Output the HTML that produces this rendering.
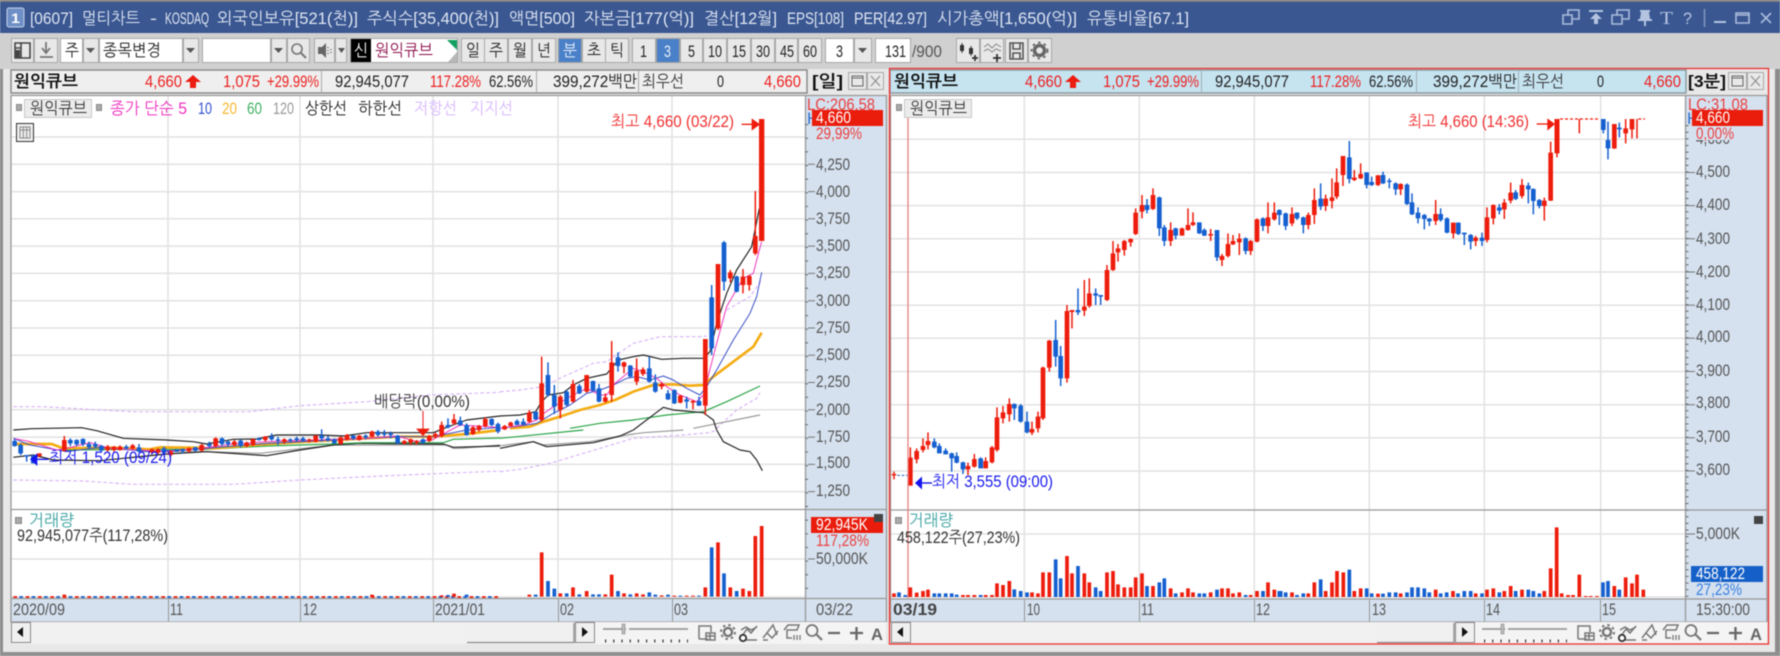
<!DOCTYPE html>
<html><head><meta charset="utf-8"><style>
html,body{margin:0;padding:0;width:1780px;height:656px;overflow:hidden;background:#d0d0d0}
svg{display:block;filter:blur(.45px)}
text{font-family:"Liberation Sans","NanumGothic","Noto Sans CJK KR",sans-serif;font-size:16.5px}
.w{fill:#fff;stroke:#a8a8a8}
.b{fill:#e8e8e8;stroke:#a8a8a8}
.g{fill:none;stroke:#e2e2e2;stroke-width:1.5}
.t{fill:#555}
.i{fill:none;stroke:#666;stroke-width:1.4}
</style></head><body>
<svg xmlns="http://www.w3.org/2000/svg" width="1780" height="656" viewBox="0 0 1780 656">
<defs>
<pattern id="d" width="2" height="2" patternUnits="userSpaceOnUse"><rect width="2" height="2" fill="#fafafa"/><rect width="1" height="1" fill="#e8e8e8"/><rect x="1" y="1" width="1" height="1" fill="#e8e8e8"/></pattern>
<clipPath id="cl"><rect x="806" y="97" width="80" height="13"/></clipPath>
<clipPath id="cr"><rect x="1686" y="97" width="80" height="13"/></clipPath>
</defs>
<rect width="1780" height="656" fill="#e8e8e8"/>
<rect x="0" y="0" width="3" height="656" fill="#8c8c8c"/>
<rect x="1775" y="0" width="5" height="656" fill="#8c8c8c"/>
<rect y="652" width="1780" height="4" fill="#909090"/>
<!-- title -->
<rect width="1780" height="33" fill="#3a5792"/>
<rect width="1780" height="2" fill="#7c7c7c"/>
<rect x="7" y="8" width="17" height="19" rx="2" fill="#6e8fc6" stroke="#c5d3ea"/>
<text x="11" y="23" fill="#fff" font-weight="bold" style="font-size:14px" textLength="9" lengthAdjust="spacingAndGlyphs">1</text>
<g fill="#dfe6f2">
<text x="30" y="24" textLength="43" lengthAdjust="spacingAndGlyphs">[0607]</text>
<text x="82" y="24" textLength="58" lengthAdjust="spacingAndGlyphs">멀티차트</text>
<text x="150" y="24" textLength="7" lengthAdjust="spacingAndGlyphs">-</text>
<text x="165" y="24" textLength="44" lengthAdjust="spacingAndGlyphs">KOSDAQ</text>
<text x="217" y="24" textLength="141" lengthAdjust="spacingAndGlyphs">외국인보유[521(천)]</text>
<text x="367" y="24" textLength="132" lengthAdjust="spacingAndGlyphs">주식수[35,400(천)]</text>
<text x="509" y="24" textLength="66" lengthAdjust="spacingAndGlyphs">액면[500]</text>
<text x="584" y="24" textLength="110" lengthAdjust="spacingAndGlyphs">자본금[177(억)]</text>
<text x="704" y="24" textLength="73" lengthAdjust="spacingAndGlyphs">결산[12월]</text>
<text x="787" y="24" textLength="57" lengthAdjust="spacingAndGlyphs">EPS[108]</text>
<text x="854" y="24" textLength="73" lengthAdjust="spacingAndGlyphs">PER[42.97]</text>
<text x="937" y="24" textLength="140" lengthAdjust="spacingAndGlyphs">시가총액[1,650(억)]</text>
<text x="1087" y="24" textLength="102" lengthAdjust="spacingAndGlyphs">유통비율[67.1]</text>
</g>
<g fill="none" stroke="#a9bbdb" stroke-width="1.6">
<path d="M1563 15h9v9h-9zM1568 15v-5h11v9h-7"/>
<path d="M1612 15h10v9h-10zM1617 15v-5h12v9h-7"/>
<path d="M1704.500 9v18" stroke="#7f95bd"/>
<path d="M1736 13h13v10h-13zM1736 15h13"/>
<path d="M1761 13l10 10M1771 13l-10 10"/>
</g>
<g fill="#b4c4e0">
<path d="M1589 10h14v2h-14zM1596 13l6 6h-4v5h-4v-5h-4z"/>
<path d="M1640 10h10v2h-1l1 7h2v2h-6v5h-2v-5h-6v-2h2l1-7h-1z"/>
<rect x="1714" y="21" width="12" height="2"/>
<text x="1660" y="24" style="font-size:18px;font-family:'Liberation Serif',serif" textLength="13" lengthAdjust="spacingAndGlyphs">T</text>
<text x="1683" y="24" style="font-size:17px" textLength="9" lengthAdjust="spacingAndGlyphs">?</text>
</g>
<!-- toolbar -->
<rect y="33" width="1780" height="36" fill="#d0d0d0"/>
<g>
<rect class="b" x="11.500" y="38.500" width="22" height="24"/><rect class="b" x="34.500" y="38.500" width="23" height="24"/>
<rect class="w" x="60.500" y="38.500" width="22" height="24"/><rect class="b" x="83.500" y="38.500" width="15" height="24"/>
<rect class="w" x="99.500" y="38.500" width="83" height="24"/><rect class="b" x="183.500" y="38.500" width="15" height="24"/>
<rect class="w" x="202.500" y="38.500" width="68" height="24"/><rect class="b" x="271.500" y="38.500" width="15" height="24"/><rect class="b" x="287.500" y="38.500" width="22" height="24"/>
<rect class="b" x="314.500" y="38.500" width="20" height="24"/><rect class="b" x="335.500" y="38.500" width="11" height="24"/>
<rect class="w" x="350.500" y="38.500" width="107" height="24"/>
<rect x="351" y="39" width="20" height="23" fill="#000"/>
<path d="M447 40h10v10z" fill="#12a060"/><path d="M457 52v10h-9z" fill="#b8b8b8"/>
<rect class="b" x="461.500" y="38.500" width="23" height="24"/><rect class="b" x="484.500" y="38.500" width="23" height="24"/><rect class="b" x="508.500" y="38.500" width="23" height="24"/><rect class="b" x="532.500" y="38.500" width="23" height="24"/>
<rect x="558.500" y="38.500" width="23" height="24" fill="#4a80c8" stroke="#a0a0a0"/>
<rect class="b" x="582.500" y="38.500" width="23" height="24"/><rect class="b" x="605.500" y="38.500" width="23" height="24"/>
<rect class="b" x="632.500" y="38.500" width="23" height="24"/>
<rect x="656.500" y="38.500" width="23" height="24" fill="#4a80c8" stroke="#a0a0a0"/>
<rect class="b" x="680.500" y="38.500" width="22" height="24"/><rect class="b" x="703.500" y="38.500" width="23" height="24"/><rect class="b" x="727.500" y="38.500" width="23" height="24"/><rect class="b" x="751.500" y="38.500" width="23" height="24"/><rect class="b" x="775.500" y="38.500" width="22" height="24"/><rect class="b" x="798.500" y="38.500" width="23" height="24"/>
<rect class="w" x="825.500" y="38.500" width="28" height="24"/><rect class="b" x="854.500" y="38.500" width="17" height="24"/>
<rect class="w" x="875.500" y="38.500" width="35" height="24"/>
<rect class="b" x="956.500" y="38.500" width="23" height="24"/><rect class="b" x="980.500" y="38.500" width="23" height="24"/><rect class="b" x="1005.500" y="38.500" width="22" height="24"/><rect class="b" x="1028.500" y="38.500" width="23" height="24"/>
</g>
<path d="M86 48h9l-4.500 5zM186 48h9l-4.500 5zM274 48h9l-4.500 5zM338 48h7l-3.500 5zM858 48h9l-4.500 5z" fill="#555"/>
<path d="M15 43h15v15h-15zM21 43v15M15 48h6" fill="none" stroke="#444" stroke-width="1.6"/>
<path d="M15 50h5v8h-5z" fill="#444"/>
<path d="M46 42v10M42 48l4 5 4-5M40 57h13" fill="none" stroke="#777" stroke-width="1.8"/>
<circle cx="297" cy="49" r="5" fill="none" stroke="#777" stroke-width="1.6"/><path d="M301 53l5 5" stroke="#777" stroke-width="2"/>
<path d="M318 47h4l4-4v15l-4-4h-4z" fill="#666"/><path d="M328 47v1M328 50v1M328 53v1M331 49v1M331 52v1" stroke="#666" stroke-width="1.4"/>
<text x="65" y="56" fill="#222" textLength="14" lengthAdjust="spacingAndGlyphs">주</text>
<text x="103" y="56" fill="#222" textLength="58" lengthAdjust="spacingAndGlyphs">종목변경</text>
<text x="354" y="56" fill="#fff" textLength="14" lengthAdjust="spacingAndGlyphs">신</text>
<text x="375" y="56" fill="#8c0b4a" textLength="58" lengthAdjust="spacingAndGlyphs">원익큐브</text>
<g fill="#222">
<text x="466" y="56" textLength="14" lengthAdjust="spacingAndGlyphs">일</text><text x="489" y="56" textLength="14" lengthAdjust="spacingAndGlyphs">주</text><text x="513" y="56" textLength="14" lengthAdjust="spacingAndGlyphs">월</text><text x="537" y="56" textLength="14" lengthAdjust="spacingAndGlyphs">년</text>
<text x="587" y="56" textLength="14" lengthAdjust="spacingAndGlyphs">초</text><text x="610" y="56" textLength="14" lengthAdjust="spacingAndGlyphs">틱</text>
<text x="640" y="57" textLength="7" lengthAdjust="spacingAndGlyphs">1</text><text x="688" y="57" textLength="7" lengthAdjust="spacingAndGlyphs">5</text>
<text x="708" y="57" textLength="14" lengthAdjust="spacingAndGlyphs">10</text><text x="732" y="57" textLength="14" lengthAdjust="spacingAndGlyphs">15</text><text x="756" y="57" textLength="14" lengthAdjust="spacingAndGlyphs">30</text><text x="780" y="57" textLength="14" lengthAdjust="spacingAndGlyphs">45</text><text x="803" y="57" textLength="14" lengthAdjust="spacingAndGlyphs">60</text>
<text x="836" y="57" textLength="7" lengthAdjust="spacingAndGlyphs">3</text><text x="885" y="57" textLength="21" lengthAdjust="spacingAndGlyphs">131</text>
</g>
<text x="563" y="56" fill="#e8f0fa" textLength="14" lengthAdjust="spacingAndGlyphs">분</text>
<text x="664" y="57" fill="#e8f0fa" textLength="7" lengthAdjust="spacingAndGlyphs">3</text>
<text x="912" y="57" fill="#555" textLength="30" lengthAdjust="spacingAndGlyphs">/900</text>
<path d="M962 43v10M971 46v10" stroke="#333" stroke-width="1"/><path d="M960 45h4v6h-4zM969 48h4v6h-4z" fill="#333"/><path d="M972 58h6M975 55v6" stroke="#333" stroke-width="1.8"/>
<path d="M984 47l4-3 4 4 4-4 5 3M984 51l4-2 4 3 4-3 5 2" fill="none" stroke="#888"/><path d="M993 58h8M997 54v8" stroke="#333" stroke-width="1.8"/>
<path d="M1010 43h13v16h-13zM1013 43v6h7v-6M1013 59v-6h7v6" fill="none" stroke="#555" stroke-width="1.6"/>
<circle cx="1039.500" cy="50.500" r="5" fill="none" stroke="#666" stroke-width="3.500"/><circle cx="1039.500" cy="50.500" r="8" fill="none" stroke="#666" stroke-width="1.800" stroke-dasharray="2.500 3.500"/>
<!-- info bars -->
<rect x="11" y="70" width="796" height="23" fill="#efefef" stroke="#8a8a8a" stroke-width="1.500"/>
<path d="M321.500 70v23M536.500 70v23M638.500 70v23" stroke="#a8a8a8"/>
<rect x="890" y="70" width="796" height="23" fill="#c6e3f0" stroke="#8a9a9f" stroke-width="1.500"/>
<path d="M1201.500 70v23M1416.500 70v23M1518.500 70v23" stroke="#a0b0b4"/>
<g id="info">
<text x="14" y="87" font-weight="bold" fill="#111" textLength="64" lengthAdjust="spacingAndGlyphs">원익큐브</text>
<text x="145" y="87" fill="#ec2020" textLength="37" lengthAdjust="spacingAndGlyphs">4,660</text>
<path d="M193 75l8 7h-5v6h-6v-6h-5z" fill="#ec1c10"/>
<text x="223" y="87" fill="#ec2020" textLength="37" lengthAdjust="spacingAndGlyphs">1,075</text>
<text x="267" y="87" fill="#ec2020" textLength="52" lengthAdjust="spacingAndGlyphs">+29.99%</text>
<text x="335" y="87" fill="#222" textLength="74" lengthAdjust="spacingAndGlyphs">92,945,077</text>
<text x="430" y="87" fill="#ec2020" textLength="51" lengthAdjust="spacingAndGlyphs">117.28%</text>
<text x="489" y="87" fill="#222" textLength="44" lengthAdjust="spacingAndGlyphs">62.56%</text>
<text x="553" y="87" fill="#222" textLength="84" lengthAdjust="spacingAndGlyphs">399,272백만</text>
<text x="642" y="87" fill="#333" textLength="42" lengthAdjust="spacingAndGlyphs">최우선</text>
<text x="717" y="87" fill="#222" textLength="7" lengthAdjust="spacingAndGlyphs">0</text>
<text x="764" y="87" fill="#ec2020" textLength="37" lengthAdjust="spacingAndGlyphs">4,660</text>
</g>
<g transform="translate(880 0)">
<text x="14" y="87" font-weight="bold" fill="#111" textLength="64" lengthAdjust="spacingAndGlyphs">원익큐브</text>
<text x="145" y="87" fill="#ec2020" textLength="37" lengthAdjust="spacingAndGlyphs">4,660</text>
<path d="M193 75l8 7h-5v6h-6v-6h-5z" fill="#ec1c10"/>
<text x="223" y="87" fill="#ec2020" textLength="37" lengthAdjust="spacingAndGlyphs">1,075</text>
<text x="267" y="87" fill="#ec2020" textLength="52" lengthAdjust="spacingAndGlyphs">+29.99%</text>
<text x="335" y="87" fill="#222" textLength="74" lengthAdjust="spacingAndGlyphs">92,945,077</text>
<text x="430" y="87" fill="#ec2020" textLength="51" lengthAdjust="spacingAndGlyphs">117.28%</text>
<text x="489" y="87" fill="#222" textLength="44" lengthAdjust="spacingAndGlyphs">62.56%</text>
<text x="553" y="87" fill="#222" textLength="84" lengthAdjust="spacingAndGlyphs">399,272백만</text>
<text x="642" y="87" fill="#333" textLength="42" lengthAdjust="spacingAndGlyphs">최우선</text>
<text x="717" y="87" fill="#222" textLength="7" lengthAdjust="spacingAndGlyphs">0</text>
<text x="764" y="87" fill="#ec2020" textLength="37" lengthAdjust="spacingAndGlyphs">4,660</text>
</g>
<text x="812" y="87" font-weight="bold" fill="#111" textLength="31" lengthAdjust="spacingAndGlyphs">[일]</text>
<text x="1688" y="87" font-weight="bold" fill="#111" textLength="38" lengthAdjust="spacingAndGlyphs">[3분]</text>
<g>
<rect class="b" x="848.500" y="72.500" width="18" height="17"/><rect class="b" x="867.500" y="72.500" width="16" height="17"/>
<rect class="b" x="1728.500" y="72.500" width="18" height="17"/><rect class="b" x="1747.500" y="72.500" width="16" height="17"/>
<path d="M852 76h11v10h-11zM852 78h11M1732 76h11v10h-11zM1732 78h11" fill="none" stroke="#666"/>
<path d="M871 76l9 10M880 76l-9 10M1751 76l9 10M1760 76l-9 10" stroke="#888"/>
</g>
<!-- plots -->
<rect x="11" y="96" width="795" height="502" fill="#fff"/>
<rect x="806" y="96" width="80" height="526" fill="#d5e1ef"/>
<rect x="891" y="96" width="795" height="503" fill="#fff"/>
<rect x="1686" y="96" width="81" height="526" fill="#d5e1ef"/>
<rect x="11" y="598" width="795" height="24" fill="#d5e1ef"/>
<rect x="891" y="599" width="795" height="23" fill="#d5e1ef"/>
<path class="g" d="M11 137H805M11 164.300H805M11 191.600H805M11 218.800H805M11 246.100H805M11 273.400H805M11 300.700H805M11 328H805M11 355.200H805M11 382.500H805M11 409.800H805M11 437.100H805M11 464.400H805M11 491.600H805M11 559H805M11 597H805"/>
<path class="g" d="M168 96V598M300 96V598M433 96V598M558 96V598M672 96V598"/>
<path class="g" d="M891 139.300H1685M891 172.500H1685M891 205.600H1685M891 238.800H1685M891 272H1685M891 305.200H1685M891 338.300H1685M891 371.500H1685M891 404.700H1685M891 437.800H1685M891 471H1685M891 534H1685M891 597H1685"/>
<path class="g" d="M1024.300 96V599M1139.300 96V599M1254.300 96V599M1369.300 96V599M1484.300 96V599M1600.700 96V599"/>
<path d="M10.500 95.500H886.500V622M805.500 96V622M11 95.500V622H886M11 509.500H886M11 598.500H886" fill="none" stroke="#989898" stroke-width="1.300"/>
<path d="M890.500 95.500H1767V622M1685.500 96V622M890.500 95.500V622H1767M891 510H1767M891 599H1767" fill="none" stroke="#989898" stroke-width="1.300"/>
<path d="M168.500 599V622M300.500 599V622M433.500 599V622M558.500 599V622M672.500 599V622M1024.500 600V622M1139.500 600V622M1254.500 600V622M1369.500 600V622M1484.500 600V622M1600.500 600V622" stroke="#989898"/>
<!-- left chart lines (zoom 4 coords) -->
<g transform="translate(0 340) scale(.33333)" fill="none" stroke-linejoin="round">
<path d="M40 200L130 200L300 210L400 215L750 215L900 197L1100 185L1290 165L1500 157M40 420L250 423L400 433L700 433L900 420L1100 410L1500 393" stroke="#d9b4f8" stroke-width="3.500" stroke-dasharray="11 7"/>
<path d="M420 335L620 335L780 340L1000 315L1340 315L1360 325L1385 325L1500 315" stroke="#9a9a9a" stroke-width="3.500"/>
<path d="M40 270L95 266L245 263L290 272L370 295L500 300L580 305L620 312L700 298L770 297L830 285L960 285L1030 288L1100 278L1300 278L1340 262L1400 240L1500 228M40 352L100 345L160 360L300 362L500 342L620 335L770 345L800 347L900 330L1000 315L1080 310L1330 312L1360 322L1500 318" stroke="#222" stroke-width="3.500"/>
<path d="M200 330L400 328L620 328L800 318L1000 312L1090 308L1330 308L1360 298L1500 294" stroke="#2aa548" stroke-width="3.500"/>
<path d="M40 312L155 312L190 325L330 323L450 328L480 322L590 323L640 325L700 320L800 312L920 305L1100 295L1200 290L1300 290L1400 282L1500 270" stroke="#f4ac12" stroke-width="8"/>
<path d="M40 295L90 315L200 335L300 322L450 335L620 325L800 310L1000 300L1200 290L1300 290L1400 270L1500 262" stroke="#3a50c8" stroke-width="3"/>
<path d="M40 295L90 305L170 330L200 325L270 308L330 325L420 330L500 335L600 325L700 312L800 305L950 300L1100 295L1190 288L1250 305L1300 298L1380 255L1500 262" stroke="#f038c0" stroke-width="3"/>
<path stroke="#ee1c0c" stroke-width="4.500" d="M118 340V352M193 288V335M323 315V335M342 318V335M360 316V332M398 312V328M456 325V340M474 325V342M512 330V350M567 322V338M605 312V335M647 292V322M703 300V320M740 305V322M759 295V318M796 288V305M853 295V312M928 296V308M947 285V308M1022 290V313M1041 282V302M1078 285V302M1116 272V292M1213 300V314M1232 296V315M1250 300V314M1288 285V306M1306 278V295M1325 245V292M1362 222V255M1419 258V285M1437 255V275M1456 232V262"/>
<path stroke="#ee1c0c" stroke-width="14" d="M118 340V348M193 300V333M323 320V330M342 320V330M360 320V330M398 316V325M456 328V338M474 328V338M512 335V345M567 325V333M605 315V332M647 295V318M703 305V315M740 308V318M759 298V315M796 290V300M853 298V305M928 298V302M947 287V305M1022 292V312M1041 285V298M1078 287V300M1116 275V290M1213 303V310M1232 298V308M1250 303V308M1288 288V303M1306 282V290M1325 255V288M1362 238V250M1419 262V282M1437 258V270M1456 237V258"/>
<path stroke="#1560d0" stroke-width="4.500" d="M44 295V320M62 310V345M80 345V365M100 345V370M211 295V318M230 298V318M249 295V318M267 305V325M286 305V325M304 315V338M379 315V330M417 312V337M492 320V342M530 328V335M548 325V340M586 320V335M628 305V322M666 292V318M684 302V320M722 298V322M777 292V302M815 280V302M834 290V315M871 295V308M890 290V305M909 290V305M965 268V305M984 288V305M1003 295V312M1060 285V300M1097 283V298M1134 270V290M1153 270V290M1172 275V295M1193 285V312M1269 295V312M1344 235V265M1381 230V258M1400 250V287M1475 235V258M1494 248V280"/>
<path stroke="#1560d0" stroke-width="14" d="M44 303V318M62 315V340M80 345V350M100 345V370M211 300V310M230 300V313M249 297V312M267 312V322M286 312V320M304 318V332M379 320V325M417 322V335M492 325V338M530 328V335M548 328V333M586 322V332M628 312V318M666 295V312M684 305V312M722 302V318M777 295V300M815 290V298M834 298V302M871 298V302M890 295V300M909 295V302M965 287V295M984 295V300M1003 298V310M1060 287V295M1097 287V292M1134 275V285M1153 280V284M1172 280V285M1193 287V310M1269 298V308M1344 255V262M1381 242V255M1400 255V285M1475 237V255M1494 252V275"/>
<path d="M1269 213V270" stroke="#ee3030" stroke-width="3.500"/><path d="M1248 266H1290L1269 288z" fill="#ee1c0c"/>
<path d="M90 358L112 340V378z" fill="#1414ee"/><path d="M112 358H145" stroke="#1414ee" stroke-width="4"/>
<path d="M40 771H1500" stroke="#ee1c0c" stroke-width="5" stroke-dasharray="11 26"/>
<path d="M58 771H1500" stroke="#1560d0" stroke-width="5" stroke-dasharray="11 26"/>
<path d="M193 771V764M1116 771V764M1325 771V766M1362 771V761" stroke="#ee1c0c" stroke-width="11"/>
<path d="M1344 771V765M1400 771V764" stroke="#1560d0" stroke-width="11"/>
</g>
<text x="374" y="407" fill="#333" textLength="96" lengthAdjust="spacingAndGlyphs">배당락(0,00%)</text>
<text x="49" y="463" fill="#1a1aee" textLength="123" lengthAdjust="spacingAndGlyphs">최저 1,520 (09/24)</text>
<!-- left zoom 5 -->
<g transform="translate(500 100) scale(.33333)" fill="none" stroke-linejoin="round">
<path d="M0 875L60 870L130 860L190 830L280 790L320 785L400 730L480 710L600 710L620 708M680 630L750 590L785 540M650 985L710 930L770 895L780 878" stroke="#d9b4f8" stroke-width="3.500" stroke-dasharray="11 7"/>
<path d="M580 985L780 945" stroke="#9a9a9a" stroke-width="3.500"/>
<path d="M210 985L300 970L400 960L500 945L610 935L680 905L780 858" stroke="#2aa548" stroke-width="3.500"/>
<path d="M0 948L60 945L107 935L125 905L145 885L190 878L220 855L260 835L320 822L355 780L400 770L430 765L485 778L550 775L610 775L630 755L650 670L680 580L710 510L755 440L778 325M400 990L490 922L520 930L610 938L640 960L650 990" stroke="#222" stroke-width="3.500"/>
<path d="M30 985L90 980L130 965L180 950L240 930L300 915L345 900L400 875L460 855L520 853L570 857L610 855L640 830L700 785L760 740L785 698" stroke="#f4ac12" stroke-width="8"/>
<path d="M0 985L60 978L110 970L160 940L210 915L260 880L300 870L340 855L380 835L410 830L450 840L490 828L520 840L560 865L600 885L620 860L650 810L700 720L750 640L770 590L785 517" stroke="#3a50c8" stroke-width="3"/>
<path d="M0 985L70 975L110 960L125 945L160 920L210 890L260 865L300 885L320 885L345 850L400 805L430 815L470 835L500 860L540 885L590 905L610 885L650 730L680 620L700 585L730 535L760 520L770 480L785 425" stroke="#f038c0" stroke-width="3"/>
<path stroke="#ee1c0c" stroke-width="4.500" d="M14 975V990M32 965V980M88 930V968M125 770V965M181 885V955M219 840V908M260 825V878M316 880V908M335 723V905M372 785V820M410 775V855M429 802V828M485 847V868M541 885V910M579 900V928M616 717V945M654 492V690M691 510V547M729 507V580M748 525V572M766 273V465"/>
<path stroke="#ee1c0c" stroke-width="14" d="M14 978V988M32 968V978M88 938V965M125 850V960M181 890V930M219 852V905M260 825V875M316 892V905M335 787V885M372 787V800M410 812V845M429 808V822M485 852V860M541 887V908M579 903V908M616 717V917M654 492V685M691 517V535M729 530V555M748 528V555M766 408V460"/>
<path stroke="#ee1c0c" stroke-width="16" d="M785 57V423"/>
<path stroke="#1560d0" stroke-width="4.500" d="M51 958V975M70 955V975M107 935V960M144 787V890M163 855V942M200 870V918M238 852V882M279 842V875M297 852V907M354 757V815M391 795V832M448 770V848M466 823V878M504 870V900M523 868V912M560 890V925M597 890V918M635 555V765M672 423V572M710 527V577"/>
<path stroke="#1560d0" stroke-width="14" d="M51 963V975M70 965V975M107 935V958M144 825V885M163 885V920M200 875V915M238 858V880M279 843V872M297 865V905M354 772V798M391 797V830M448 805V845M466 848V875M504 880V898M523 870V910M560 898V905M597 903V917M635 592V745M672 427V545M710 530V575"/>
<path d="M725 73H760" stroke="#ee1c0c" stroke-width="4"/><path d="M755 55L780 73L755 92z" fill="#ee1c0c"/>
</g>
<text x="611" y="127" fill="#f03030" textLength="123" lengthAdjust="spacingAndGlyphs">최고 4,660 (03/22)</text>
<!-- left lines lower zoom 6 -->
<g transform="translate(500 430) scale(.33333)" fill="none" stroke-linejoin="round">
<path d="M0 125L60 118L150 100L250 70L400 25L550 15L630 8L650 0" stroke="#d9b4f8" stroke-width="3.500" stroke-dasharray="11 7"/>
<path d="M0 47L100 35L130 45L270 35L380 15L430 8L550 0" stroke="#9a9a9a" stroke-width="3.500"/>
<path d="M0 25L250 0" stroke="#2aa548" stroke-width="3.500"/>
<path d="M0 55L100 35L140 50L280 38L360 18L400 0M650 0L670 35L720 60L750 65L770 90L787 122" stroke="#222" stroke-width="3.500"/>
<path stroke="#ee1c0c" stroke-width="11" d="M88 500V494M125 500V367M181 500V490M219 500V472M260 500V483M316 500V493M335 500V434M372 500V490M410 500V490M429 500V493M485 500V496M523 500V497M560 500V497M579 500V497M616 500V472M654 500V337M691 500V472M729 500V476M748 500V483M766 500V318M785 500V288"/>
<path stroke="#1560d0" stroke-width="11" d="M107 500V494M144 500V453M163 500V476M200 500V490M238 500V493M279 500V493M297 500V493M354 500V483M391 500V493M448 500V487M466 500V494M504 500V494M541 500V497M597 500V497M635 500V352M672 500V430M710 500V483"/>
</g>
<!-- right candles zoom 7 -->
<g transform="translate(890 100) scale(.33333)" fill="none">
<path d="M22 1126H52" stroke="#1560d0" stroke-width="3" stroke-dasharray="8 5"/>
<path stroke="#ee1c0c" stroke-width="4.500" d="M12 1115V1138M61 1042V1157M80 1045V1090M99 1015V1057M114 997V1048M234 1088V1125M253 1062V1103M287 1072V1105M306 1038V1090M321 922V1055M339 918V970M358 895V965M426 965V1005M444 935V997M459 800V960M478 720V815M531 615V848M546 630V685M583 540V648M598 535V623M651 495V603M669 423V513M684 432V485M703 420V467M722 415V440M737 325V405M756 285V355M789 265V330M842 367V438M876 383V407M894 325V392M909 337V378M962 387V423M996 462V498M1014 400V472M1029 405V435M1048 400V465M1082 420V465M1101 355V427M1134 307V400M1153 307V362M1206 322V378M1255 338V388M1273 265V372M1307 284V333M1326 235V325"/>
<path stroke="#ee1c0c" stroke-width="14" d="M12 1122V1126M61 1073V1157M80 1053V1078M99 1038V1050M114 1023V1035M234 1098V1108M253 1077V1100M287 1083V1105M306 1042V1087M321 952V1050M339 937V955M358 912V943M426 987V998M444 950V985M459 803V955M478 722V803M531 633V835M546 630V636M583 620V632M598 580V618M651 510V600M669 460V510M684 445V457M703 423V450M722 417V427M737 338V402M756 315V335M789 285V327M842 390V423M876 385V407M894 375V390M909 367V375M962 402V407M996 468V480M1014 432V468M1029 423V433M1048 416V427M1082 423V453M1101 358V425M1134 352V378M1153 338V358M1206 342V370M1255 345V375M1273 300V345M1307 296V318M1326 292V303"/>
<path stroke="#1560d0" stroke-width="4.500" d="M133 1015V1045M148 1030V1060M167 1045V1063M185 1058V1115M200 1057V1090M219 1085V1122M272 1072V1105M373 910V960M392 912V968M411 935V1000M497 660V800M512 738V858M564 565V645M617 565V615M632 585V615M771 297V340M808 290V408M823 375V438M857 383V418M928 367V402M943 385V408M981 390V483M1067 412V463M1119 352V393M1168 328V375M1187 338V390M1221 337V360M1240 350V400M1292 250V330"/>
<path stroke="#1560d0" stroke-width="14" d="M133 1025V1042M148 1038V1060M167 1052V1063M185 1060V1075M200 1068V1088M219 1087V1108M272 1075V1105M373 912V925M392 917V965M411 965V997M497 720V770M512 768V835M564 630V637M617 580V587M632 585V590M771 315V330M808 292V385M823 382V423M857 385V407M928 367V400M943 390V407M981 390V472M1067 415V453M1119 355V378M1168 330V345M1187 340V378M1221 338V355M1240 352V375M1292 296V320"/>
</g>
<!-- right candles zoom 8 -->
<g transform="translate(1330 100) scale(.33333)" fill="none">
<path stroke="#ee1c0c" stroke-width="4.500" d="M20 205V297M39 168V258M73 210V243M92 190V237M144 225V258M212 250V285M317 300V375M370 368V415M437 408V438M471 322V427M490 313V373M523 297V357M542 248V310M576 237V295M643 293V362M662 125V303M748 57V100M853 72V147M887 57V130M906 57V115M921 57V115"/>
<path stroke="#ee1c0c" stroke-width="14" d="M20 247V290M39 168V225M73 233V240M92 222V235M144 226V255M212 252V268M317 342V363M370 368V400M437 413V423M471 352V420M490 315V355M523 308V328M542 278V302M576 255V288M643 302V318M662 158V302M853 72V145M887 85V100M906 57V88"/>
<path stroke="#ee1c0c" stroke-width="15" d="M681 57V160"/><path stroke="#ee1c0c" stroke-width="4.500" d="M681 57V172"/>
<path d="M690 57H808M925 57H945" stroke="#ee1c0c" stroke-width="3.500" stroke-dasharray="9 6"/>
<path stroke="#1560d0" stroke-width="4.500" d="M58 123V250M110 217V265M125 230V258M159 215V252M178 235V265M197 247V285M231 250V315M246 280V345M264 322V370M283 342V388M298 354V378M332 325V365M351 352V400M385 367V405M403 398V435M422 402V448M456 398V438M508 312V343M557 270V300M595 248V310M610 265V343M628 297V325M820 57V100M834 65V178M868 68V112"/>
<path stroke="#1560d0" stroke-width="14" d="M58 172V237M110 217V255M125 246V255M159 225V250M178 242V246M197 250V268M231 254V312M246 307V343M264 338V355M283 345V357M298 356V364M332 342V360M351 355V398M385 368V402M403 398V403M422 405V425M456 413V423M508 322V332M557 277V297M595 257V268M610 267V303M628 300V318M820 57V90M834 120V145M868 83V88"/>
<path d="M620 72H655" stroke="#ee1c0c" stroke-width="4"/><path d="M652 55L675 72L652 92z" fill="#ee1c0c"/>
</g>
<path d="M908 115V598" stroke="#e98080" stroke-width="1.300"/>
<path d="M915 483L922 476.500V489.500z" fill="#1414ee"/><path d="M921 483H932" stroke="#1414ee" stroke-width="1.400"/>
<text x="932" y="487" fill="#1a1aee" textLength="121" lengthAdjust="spacingAndGlyphs">최저 3,555 (09:00)</text>
<text x="1408" y="127" fill="#f03030" textLength="121" lengthAdjust="spacingAndGlyphs">최고 4,660 (14:36)</text>
<!-- right volume -->
<g transform="translate(890 500) scale(.33333)" fill="none" stroke-width="11">
<path stroke="#ee1c0c" d="M12 291V280M61 291V262M80 291V278M99 291V273M114 291V269M219 291V285M234 291V285M253 291V285M287 291V285M306 291V285M321 291V250M339 291V255M358 291V243M426 291V277M444 291V280M459 291V217M478 291V217M531 291V168M546 291V220M583 291V220M598 291V247M651 291V217M669 291V213M684 291V253M703 291V262M722 291V262M737 291V232M756 291V220M789 291V258M842 291V265M876 291V277M894 291V265M909 291V277M962 291V277M996 291V265M1014 291V265M1029 291V280M1048 291V277M1082 291V285M1101 291V273M1134 291V247M1153 291V269"/>
<path stroke="#1560d0" d="M27 291V277M46 291V285M133 291V280M148 291V280M167 291V280M185 291V280M200 291V284M272 291V285M373 291V268M392 291V273M411 291V277M497 291V178M512 291V235M564 291V198M617 291V262M632 291V273M771 291V258M808 291V247M823 291V235M857 291V280M928 291V280M943 291V280M981 291V269M1067 291V285M1119 291V273M1168 291V273"/>
</g>
<g transform="translate(1280 500) scale(.33333)" fill="none" stroke-width="11">
<path stroke="#ee1c0c" d="M36 291V277M85 291V280M103 291V247M137 291V273M156 291V247M171 291V213M190 291V217M223 291V273M242 291V265M294 291V281M362 291V280M467 291V269M519 291V273M587 291V280M621 291V269M640 291V265M673 291V273M692 291V258M726 291V269M793 291V273M812 291V205M830 291V82M845 291V280M864 291V285M879 291V285M898 291V224M917 291V288M932 291V288M951 291V288M1003 291V258M1037 291V232M1056 291V250M1071 291V224M1090 291V269"/>
<path stroke="#1560d0" d="M2 291V273M17 291V277M51 291V285M70 291V280M122 291V238M208 291V209M260 291V265M275 291V280M309 291V281M328 291V277M347 291V277M381 291V277M396 291V262M414 291V262M433 291V265M448 291V277M482 291V280M500 291V277M534 291V280M553 291V273M572 291V273M606 291V280M658 291V277M707 291V273M745 291V269M760 291V273M778 291V280M969 291V247M984 291V243M1018 291V269"/>
</g>
<!-- axis left -->
<path d="M806.500 124V598" stroke="#777" stroke-width="3" stroke-dasharray="1.200 12.440" fill="none"/>
<path d="M808 164.300h7M808 191.600h7M808 218.800h7M808 246.100h7M808 273.400h7M808 300.700h7M808 328h7M808 355.200h7M808 382.500h7M808 409.800h7M808 437.100h7M808 464.400h7M808 491.600h7M808 559h7" stroke="#777" fill="none"/>
<path d="M1687 125V597" stroke="#777" stroke-width="3" stroke-dasharray="1.200 5.430" fill="none"/>
<path d="M1686 172.500h9M1686 205.600h9M1686 238.800h9M1686 272h9M1686 305.200h9M1686 338.300h9M1686 371.500h9M1686 404.700h9M1686 437.800h9M1686 471h9M1686 534h9" stroke="#777" fill="none"/>
<g class="t">
<text x="816" y="170" textLength="34" lengthAdjust="spacingAndGlyphs">4,250</text>
<text x="816" y="197" textLength="34" lengthAdjust="spacingAndGlyphs">4,000</text>
<text x="816" y="224" textLength="34" lengthAdjust="spacingAndGlyphs">3,750</text>
<text x="816" y="251" textLength="34" lengthAdjust="spacingAndGlyphs">3,500</text>
<text x="816" y="278" textLength="34" lengthAdjust="spacingAndGlyphs">3,250</text>
<text x="816" y="306" textLength="34" lengthAdjust="spacingAndGlyphs">3,000</text>
<text x="816" y="333" textLength="34" lengthAdjust="spacingAndGlyphs">2,750</text>
<text x="816" y="360" textLength="34" lengthAdjust="spacingAndGlyphs">2,500</text>
<text x="816" y="387" textLength="34" lengthAdjust="spacingAndGlyphs">2,250</text>
<text x="816" y="415" textLength="34" lengthAdjust="spacingAndGlyphs">2,000</text>
<text x="816" y="442" textLength="34" lengthAdjust="spacingAndGlyphs">1,750</text>
<text x="816" y="468" textLength="34" lengthAdjust="spacingAndGlyphs">1,500</text>
<text x="816" y="496" textLength="34" lengthAdjust="spacingAndGlyphs">1,250</text>
<text x="816" y="564" textLength="52" lengthAdjust="spacingAndGlyphs">50,000K</text>
<text x="816" y="615" textLength="37" lengthAdjust="spacingAndGlyphs">03/22</text>
<text x="1696" y="144" textLength="34" lengthAdjust="spacingAndGlyphs">4,600</text>
<text x="1696" y="177" textLength="34" lengthAdjust="spacingAndGlyphs">4,500</text>
<text x="1696" y="210" textLength="34" lengthAdjust="spacingAndGlyphs">4,400</text>
<text x="1696" y="244" textLength="34" lengthAdjust="spacingAndGlyphs">4,300</text>
<text x="1696" y="277" textLength="34" lengthAdjust="spacingAndGlyphs">4,200</text>
<text x="1696" y="310" textLength="34" lengthAdjust="spacingAndGlyphs">4,100</text>
<text x="1696" y="342" textLength="34" lengthAdjust="spacingAndGlyphs">4,000</text>
<text x="1696" y="376" textLength="34" lengthAdjust="spacingAndGlyphs">3,900</text>
<text x="1696" y="408" textLength="34" lengthAdjust="spacingAndGlyphs">3,800</text>
<text x="1696" y="442" textLength="34" lengthAdjust="spacingAndGlyphs">3,700</text>
<text x="1696" y="475" textLength="34" lengthAdjust="spacingAndGlyphs">3,600</text>
<text x="1696" y="539" textLength="44" lengthAdjust="spacingAndGlyphs">5,000K</text>
<text x="1696" y="615" textLength="54" lengthAdjust="spacingAndGlyphs">15:30:00</text>
<text x="13" y="615" textLength="52" lengthAdjust="spacingAndGlyphs">2020/09</text>
<text x="170" y="615" textLength="13" lengthAdjust="spacingAndGlyphs">11</text>
<text x="303" y="615" textLength="14" lengthAdjust="spacingAndGlyphs">12</text>
<text x="435" y="615" textLength="50" lengthAdjust="spacingAndGlyphs">2021/01</text>
<text x="560" y="615" textLength="14" lengthAdjust="spacingAndGlyphs">02</text>
<text x="674" y="615" textLength="14" lengthAdjust="spacingAndGlyphs">03</text>
<text x="1027" y="615" textLength="13" lengthAdjust="spacingAndGlyphs">10</text>
<text x="1141" y="615" textLength="13" lengthAdjust="spacingAndGlyphs">11</text>
<text x="1256" y="615" textLength="14" lengthAdjust="spacingAndGlyphs">12</text>
<text x="1372" y="615" textLength="14" lengthAdjust="spacingAndGlyphs">13</text>
<text x="1486" y="615" textLength="14" lengthAdjust="spacingAndGlyphs">14</text>
<text x="1602" y="615" textLength="14" lengthAdjust="spacingAndGlyphs">15</text>
</g>
<text x="893" y="615" font-weight="bold" fill="#444" textLength="44" lengthAdjust="spacingAndGlyphs">03/19</text>
<text x="807" y="110" fill="#e84040" clip-path="url(#cl)" textLength="68" lengthAdjust="spacingAndGlyphs">LC:206.58</text>
<text x="1688" y="110" fill="#e84040" clip-path="url(#cr)" textLength="60" lengthAdjust="spacingAndGlyphs">LC:31.08</text>
<text x="807" y="124" fill="#3070d0">H</text><text x="1687" y="124" fill="#3070d0">H</text>
<rect x="812" y="110" width="71" height="16" fill="#ea1c0c"/>
<rect x="1692" y="110" width="71" height="16" fill="#ea1c0c"/>
<text x="816" y="123" fill="#fff" textLength="35" lengthAdjust="spacingAndGlyphs">4,660</text>
<text x="1696" y="123" fill="#fff" textLength="34" lengthAdjust="spacingAndGlyphs">4,660</text>
<rect x="1694" y="127" width="42" height="13" fill="#d5e1ef"/>
<text x="816" y="139" fill="#ec4040" textLength="46" lengthAdjust="spacingAndGlyphs">29,99%</text>
<text x="1696" y="139" fill="#ec4040" textLength="38" lengthAdjust="spacingAndGlyphs">0,00%</text>
<rect x="811" y="517" width="72" height="16" fill="#ea1c0c"/>
<text x="816" y="530" fill="#fff" textLength="52" lengthAdjust="spacingAndGlyphs">92,945K</text>
<text x="816" y="546" fill="#ec4040" textLength="53" lengthAdjust="spacingAndGlyphs">117,28%</text>
<rect x="1691" y="566" width="72" height="16" fill="#1560c8"/>
<text x="1696" y="579" fill="#fff" textLength="49" lengthAdjust="spacingAndGlyphs">458,122</text>
<text x="1696" y="595" fill="#3c80e0" textLength="46" lengthAdjust="spacingAndGlyphs">27,23%</text>
<rect x="874" y="514" width="9" height="8" fill="#444"/><rect x="1754" y="516" width="9" height="8" fill="#444"/>
<!-- legends -->
<g fill="#aaa" stroke="#888"><rect x="16.500" y="104.500" width="5" height="6"/><rect x="96.500" y="104.500" width="5" height="6"/><rect x="896.500" y="104.500" width="5" height="6"/><rect x="15.500" y="517.500" width="6" height="6"/><rect x="895.500" y="517.500" width="6" height="6"/></g>
<rect x="24.500" y="99.500" width="67" height="18" fill="#ececec" stroke="#c8c8c8"/>
<rect x="904.500" y="99.500" width="67" height="18" fill="#ececec" stroke="#c8c8c8"/>
<text x="30" y="114" fill="#333" textLength="57" lengthAdjust="spacingAndGlyphs">원익큐브</text>
<text x="910" y="114" fill="#333" textLength="57" lengthAdjust="spacingAndGlyphs">원익큐브</text>
<text x="110" y="114" fill="#f030c0" textLength="77" lengthAdjust="spacingAndGlyphs">종가 단순 5</text>
<text x="198" y="114" fill="#3050d0" textLength="14" lengthAdjust="spacingAndGlyphs">10</text>
<text x="222" y="114" fill="#f8b830" textLength="15" lengthAdjust="spacingAndGlyphs">20</text>
<text x="247" y="114" fill="#40b060" textLength="15" lengthAdjust="spacingAndGlyphs">60</text>
<text x="273" y="114" fill="#999" textLength="21" lengthAdjust="spacingAndGlyphs">120</text>
<text x="305" y="114" fill="#222" textLength="42" lengthAdjust="spacingAndGlyphs">상한선</text>
<text x="358" y="114" fill="#222" textLength="44" lengthAdjust="spacingAndGlyphs">하한선</text>
<text x="414" y="114" fill="#d8b8ff" textLength="43" lengthAdjust="spacingAndGlyphs">저항선</text>
<text x="470" y="114" fill="#d8b8ff" textLength="43" lengthAdjust="spacingAndGlyphs">지지선</text>
<rect x="16.500" y="123.500" width="17" height="18" fill="#eee" stroke="#333"/>
<path d="M20 127h10v11h-10zM20 130h10M23.300 127v11M26.700 127v11" fill="none" stroke="#888"/>
<text x="29" y="526" fill="#3aa0a0" textLength="45" lengthAdjust="spacingAndGlyphs">거래량</text>
<text x="909" y="526" fill="#3aa0a0" textLength="44" lengthAdjust="spacingAndGlyphs">거래량</text>
<text x="17" y="541" fill="#333" textLength="151" lengthAdjust="spacingAndGlyphs">92,945,077주(117,28%)</text>
<text x="897" y="543" fill="#333" textLength="123" lengthAdjust="spacingAndGlyphs">458,122주(27,23%)</text>
<!-- scrollbars -->
<rect x="11" y="622" width="584" height="22" fill="url(#d)"/>
<rect x="891" y="622" width="584" height="22" fill="url(#d)"/>
<rect x="595" y="622" width="291" height="22" fill="#f4f4f4"/>
<rect x="1475" y="622" width="292" height="22" fill="#f4f4f4"/>
<g fill="#f0f0f0"><rect x="467" y="623" width="107" height="20"/><rect x="1377" y="623" width="77" height="20"/></g>
<path d="M467 642.500H574V623M1377 642.500H1454V623" fill="none" stroke="#8a8a8a" stroke-width="1.300"/>
<g fill="#f0f0f0" stroke="#8a8a8a">
<rect x="11.500" y="622.500" width="19" height="20"/><rect x="575.500" y="622.500" width="19" height="20"/>
<rect x="891.500" y="622.500" width="19" height="20"/><rect x="1455.500" y="622.500" width="19" height="20"/>
</g>
<path d="M17 632l6-5v10zM897 632l6-5v10zM588 632l-6-5v10zM1468 632l-6-5v10z" fill="#111"/>
<g id="tools">
<path d="M603 629H626M629 629H688" stroke="#999" stroke-width="1.800"/>
<path d="M622 624h3v10h-3z" fill="#bbb" stroke="#888" stroke-width=".6"/>
<path d="M605 641H688" stroke="#333" stroke-width="3" stroke-dasharray="1.200 7"/>
<g fill="none" stroke="#777" stroke-width="1.500">
<path d="M708 639h-8a1 1 0 0 1-1-1v-12h12v6M706 633h9v7h-9zM710 633v7M706 636h9"/>
<circle cx="728" cy="632" r="4" stroke-width="2.500"/><circle cx="728" cy="632" r="7" stroke-dasharray="2.500 3" stroke-width="2"/>
<path d="M742 636l5-7 4 4 6-7M741 630l5-3 5 3 6-3M742 640h15"/>
<path d="M763 638l10-13 4 10M767 633l5 5 6-7M763 640h5"/>
<path d="M784 630l4-5h11l-2 5h-10v8h5M788 630h9"/><path d="M794 640v-5M797 640v-5M800 640v-5" stroke-width="1.300"/>
<circle cx="812" cy="630.500" r="5.500" stroke-width="1.800"/><path d="M816 634l6 6" stroke-width="2.200"/>
</g>
<path d="M828 633h12M850 633h13M856.500 627v13" stroke="#666" stroke-width="2.300"/>
<circle cx="743" cy="638" r="3.200" fill="#fff" stroke="#333" stroke-width="1.800"/>
<text x="871" y="640" font-weight="bold" fill="#666" style="font-size:17px" textLength="12" lengthAdjust="spacingAndGlyphs">A</text>
</g>
<g transform="translate(879 0)">
<path d="M603 629H626M629 629H688" stroke="#999" stroke-width="1.800"/>
<path d="M622 624h3v10h-3z" fill="#bbb" stroke="#888" stroke-width=".6"/>
<path d="M605 641H688" stroke="#333" stroke-width="3" stroke-dasharray="1.200 7"/>
<g fill="none" stroke="#777" stroke-width="1.500">
<path d="M708 639h-8a1 1 0 0 1-1-1v-12h12v6M706 633h9v7h-9zM710 633v7M706 636h9"/>
<circle cx="728" cy="632" r="4" stroke-width="2.500"/><circle cx="728" cy="632" r="7" stroke-dasharray="2.500 3" stroke-width="2"/>
<path d="M742 636l5-7 4 4 6-7M741 630l5-3 5 3 6-3M742 640h15"/>
<path d="M763 638l10-13 4 10M767 633l5 5 6-7M763 640h5"/>
<path d="M784 630l4-5h11l-2 5h-10v8h5M788 630h9"/><path d="M794 640v-5M797 640v-5M800 640v-5" stroke-width="1.300"/>
<circle cx="812" cy="630.500" r="5.500" stroke-width="1.800"/><path d="M816 634l6 6" stroke-width="2.200"/>
</g>
<path d="M828 633h12M850 633h13M856.500 627v13" stroke="#666" stroke-width="2.300"/>
<circle cx="743" cy="638" r="3.200" fill="#fff" stroke="#333" stroke-width="1.800"/>
<text x="871" y="640" font-weight="bold" fill="#666" style="font-size:17px" textLength="12" lengthAdjust="spacingAndGlyphs">A</text>
</g>
<!-- red frame -->
<rect x="889.500" y="68.500" width="879" height="575.500" fill="none" stroke="#ef3030" stroke-width="1.300"/>
</svg>
</body></html>
